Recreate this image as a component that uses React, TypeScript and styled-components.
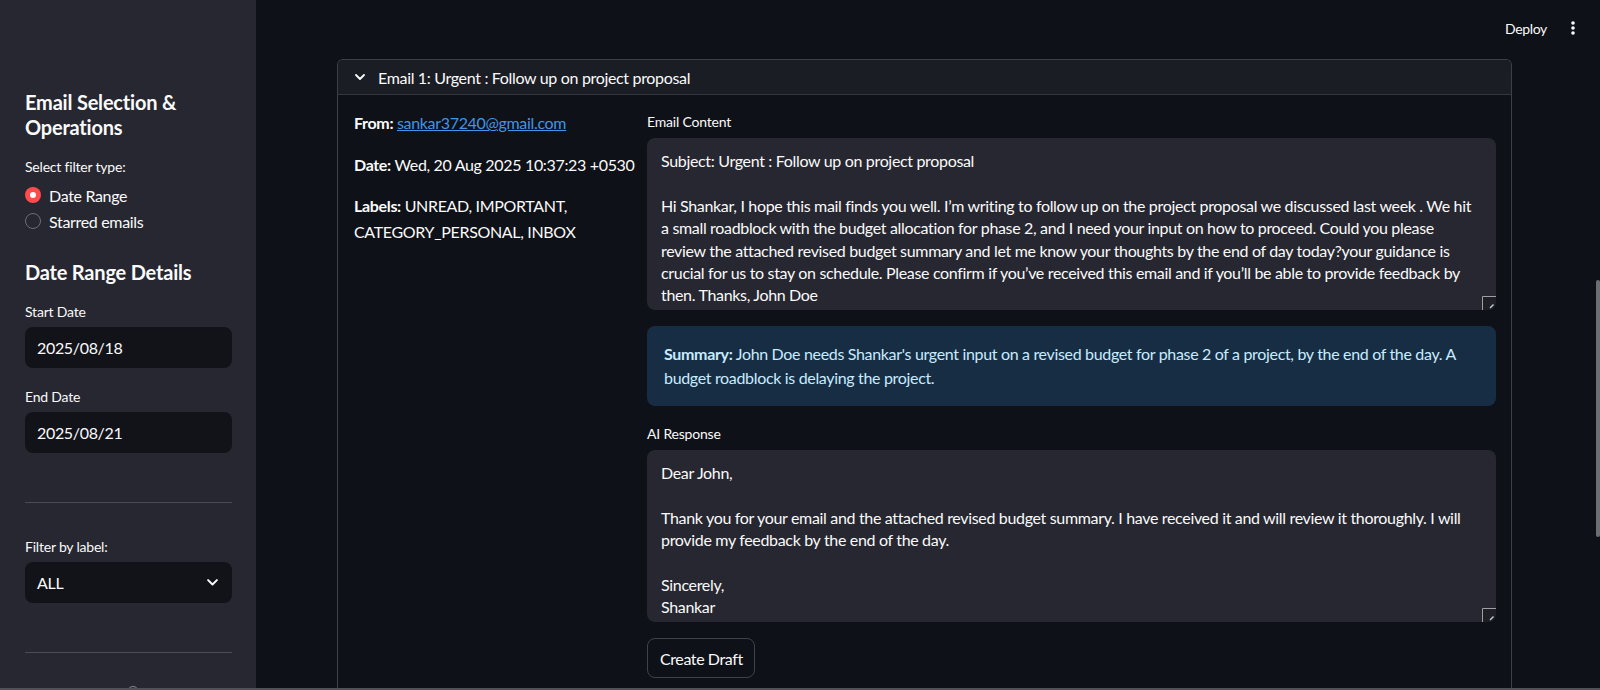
import React from "react";
import styled, { createGlobalStyle } from "styled-components";

const Global = createGlobalStyle`
  html, body { margin: 0; padding: 0; background: #0e1117; }
  body {
    font-family: Lato, "Noto Sans", sans-serif;
    color: #fafafa;
    letter-spacing: -0.33px;
    -webkit-font-smoothing: antialiased;
  }
  * { box-sizing: border-box; }
`;

const Shell = styled.div`
  display: flex;
  height: 690px;
  overflow: hidden;
  border-bottom: 2px solid #4f5158;
`;

/* ---------- Sidebar ---------- */
const Sidebar = styled.aside`
  width: 256px;
  flex-shrink: 0;
  background: #262730;
  padding: 90px 24px 0 25px;
  display: flex;
  flex-direction: column;
  & > * { flex-shrink: 0; }
`;

const SideHeading = styled.h2<{ $mt?: number }>`
  margin: ${(p) => p.$mt ?? 0}px 0 0;
  font-size: 20px;
  font-weight: 700;
  line-height: 25px;
  letter-spacing: -0.2px;
`;

const SmallLabel = styled.div<{ $mt?: number }>`
  margin-top: ${(p) => p.$mt ?? 0}px;
  font-size: 14px;
  line-height: 21px;
  letter-spacing: -0.2px;
`;

const RadioGroup = styled.div`
  display: flex;
  flex-direction: column;
  margin-top: 5px;
`;

const RadioRow = styled.div`
  display: flex;
  align-items: center;
  gap: 8px;
  height: 26px;
  font-size: 16px;
`;

const RadioDot = styled.span<{ $on?: boolean }>`
  width: 16px;
  height: 16px;
  border-radius: 50%;
  flex-shrink: 0;
  display: flex;
  align-items: center;
  justify-content: center;
  background: ${(p) => (p.$on ? "#ff4b4b" : "transparent")};
  border: ${(p) => (p.$on ? "none" : "1px solid #6c6e76")};
  &::after {
    content: "";
    display: ${(p) => (p.$on ? "block" : "none")};
    width: 6px;
    height: 6px;
    border-radius: 50%;
    background: #ffffff;
  }
`;

const InputBox = styled.div`
  margin-top: 5px;
  height: 41px;
  border-radius: 8px;
  background: #111319;
  display: flex;
  align-items: center;
  justify-content: space-between;
  padding: 0 14px 0 12px;
  font-size: 16px;
`;

const Divider = styled.hr<{ $mt?: number }>`
  margin: ${(p) => p.$mt ?? 0}px 0 0;
  border: none;
  height: 1px;
  background: #4a4b53;
`;

const Knob = styled.div`
  margin: 33px 0 0 102px;
  width: 12px;
  height: 12px;
  border-radius: 50%;
  border: 1.5px solid #8a8b90;
`;

/* ---------- Main ---------- */
const Main = styled.main`
  flex: 1;
  min-width: 0;
  position: relative;
  display: flex;
  flex-direction: column;
  overflow: hidden;
`;

const TopBar = styled.header`
  height: 56px;
  flex-shrink: 0;
  display: flex;
  justify-content: flex-end;
  align-items: center;
  gap: 24px;
  padding-right: 25px;
  font-size: 14px;
`;

const Content = styled.div`
  margin: 3px 0 0 81px;
  width: 1175px;
  flex-shrink: 0;
`;

const Expander = styled.section`
  border: 1px solid #3d4047;
  border-bottom: none;
  border-radius: 6px 6px 0 0;
  overflow: hidden;
`;

const ExpHeader = styled.div`
  height: 35px;
  background: #1b1d24;
  border-bottom: 1px solid #33363d;
  display: flex;
  align-items: center;
  gap: 13px;
  padding-left: 17px;
  font-size: 16px;
`;

const ExpBody = styled.div`
  display: grid;
  grid-template-columns: 277px minmax(0, 1fr);
  gap: 16px;
  padding: 15px 15px 60px 16px;
`;

const MetaCol = styled.div`
  display: flex;
  flex-direction: column;
`;

const Meta = styled.p`
  margin: 0 0 16px;
  font-size: 16px;
  line-height: 25.6px;
  white-space: nowrap;
  b { font-weight: 700; }
  a { color: #3f95e8; text-decoration: underline; }
`;

const WorkCol = styled.div`
  display: flex;
  flex-direction: column;
  min-width: 0;
`;

const FieldLabel = styled.div<{ $mt?: number }>`
  margin-top: ${(p) => p.$mt ?? 0}px;
  height: 24px;
  font-size: 14px;
  line-height: 24px;
  margin-bottom: 4px;
  letter-spacing: -0.2px;
`;

const TextArea = styled.div`
  position: relative;
  height: 172px;
  background: #262730;
  border-radius: 8px;
  padding: 12px 14px;
  font-size: 16px;
  line-height: 22.4px;
  white-space: pre;
  overflow: hidden;
`;

const Grip = styled.svg`
  position: absolute;
  right: 0;
  bottom: 0;
`;

const Summary = styled.div`
  margin-top: 16px;
  background: #172d43;
  color: #c7ebff;
  border-radius: 8px;
  padding: 16px 17px;
  font-size: 16px;
  line-height: 24px;
  white-space: nowrap;
  b { font-weight: 700; }
`;

const Button = styled.button`
  margin-top: 16px;
  align-self: flex-start;
  height: 40px;
  padding: 0 11px 0 12px;
  border: 1px solid #3f4249;
  border-radius: 8px;
  background: #0e1117;
  color: #fafafa;
  font-family: inherit;
  font-size: 16px;
  letter-spacing: -0.4px;
`;

const ScrollThumb = styled.div`
  position: absolute;
  right: 0;
  top: 280px;
  width: 4px;
  height: 257px;
  border-radius: 2px;
  background: #6d6e72;
`;

const emailText = [
  "Subject: Urgent : Follow up on project proposal",
  "",
  "Hi Shankar, I hope this mail finds you well. I\u2019m writing to follow up on the project proposal we discussed last week . We hit",
  "a small roadblock with the budget allocation for phase 2, and I need your input on how to proceed. Could you please",
  "review the attached revised budget summary and let me know your thoughts by the end of day today?your guidance is",
  "crucial for us to stay on schedule. Please confirm if you\u2019ve received this email and if you\u2019ll be able to provide feedback by",
  "then. Thanks, John Doe",
].join("\n");

const replyText = [
  "Dear John,",
  "",
  "Thank you for your email and the attached revised budget summary. I have received it and will review it thoroughly. I will",
  "provide my feedback by the end of the day.",
  "",
  "Sincerely,",
  "Shankar",
].join("\n");

const ResizeGrip = () => (
  <Grip width="14" height="14" viewBox="0 0 14 14">
    <rect x="0" y="0" width="14" height="14" fill="#1f2027" />
    <path d="M0.5 14 V0.5 H14" stroke="#a0a0a4" strokeWidth="1" fill="none" />
    <path d="M8 12 L11.5 8.5" stroke="#c8c8cc" strokeWidth="1.4" />
  </Grip>
);

const Chevron = ({ size = 10 }: { size?: number }) => (
  <svg width={size} height={size * 0.6} viewBox="0 0 10 6">
    <path d="M1 1 L5 5 L9 1" stroke="#fafafa" strokeWidth="1.8" fill="none" strokeLinecap="round" strokeLinejoin="round" />
  </svg>
);

const Dots = () => (
  <svg width="4" height="14" viewBox="0 0 4 14">
    <circle cx="2" cy="2" r="1.8" fill="#fafafa" />
    <circle cx="2" cy="7" r="1.8" fill="#fafafa" />
    <circle cx="2" cy="12" r="1.8" fill="#fafafa" />
  </svg>
);

export default function App() {
  return (
    <>
      <Global />
      <Shell>
        <Sidebar>
          <SideHeading>
            Email Selection &amp;
            <br />
            Operations
          </SideHeading>
          <SmallLabel $mt={16}>Select filter type:</SmallLabel>
          <RadioGroup>
            <RadioRow>
              <RadioDot $on />
              Date Range
            </RadioRow>
            <RadioRow>
              <RadioDot />
              Starred emails
            </RadioRow>
          </RadioGroup>
          <SideHeading $mt={26}>Date Range Details</SideHeading>
          <SmallLabel $mt={16}>Start Date</SmallLabel>
          <InputBox>2025/08/18</InputBox>
          <SmallLabel $mt={18}>End Date</SmallLabel>
          <InputBox>2025/08/21</InputBox>
          <Divider $mt={49} />
          <SmallLabel $mt={33}>Filter by label:</SmallLabel>
          <InputBox>
            ALL
            <Chevron size={11} />
          </InputBox>
          <Divider $mt={49} />
          <Knob />
        </Sidebar>
        <Main>
          <TopBar>
            <span>Deploy</span>
            <Dots />
          </TopBar>
          <Content>
            <Expander>
              <ExpHeader>
                <Chevron size={10} />
                Email 1: Urgent : Follow up on project proposal
              </ExpHeader>
              <ExpBody>
                <MetaCol>
                  <Meta>
                    <b>From:</b> <a href="#">sankar37240@gmail.com</a>
                  </Meta>
                  <Meta>
                    <b>Date:</b> Wed, 20 Aug 2025 10:37:23 +0530
                  </Meta>
                  <Meta>
                    <b>Labels:</b> UNREAD, IMPORTANT,
                    <br />
                    CATEGORY_PERSONAL, INBOX
                  </Meta>
                </MetaCol>
                <WorkCol>
                  <FieldLabel>Email Content</FieldLabel>
                  <TextArea>
                    {emailText}
                    <ResizeGrip />
                  </TextArea>
                  <Summary>
                    <b>Summary:</b> John Doe needs Shankar's urgent input on a revised budget for phase 2 of a project, by the end of the day. A
                    <br />
                    budget roadblock is delaying the project.
                  </Summary>
                  <FieldLabel $mt={16}>AI Response</FieldLabel>
                  <TextArea>
                    {replyText}
                    <ResizeGrip />
                  </TextArea>
                  <Button>Create Draft</Button>
                </WorkCol>
              </ExpBody>
            </Expander>
          </Content>
          <ScrollThumb />
        </Main>
      </Shell>
    </>
  );
}
